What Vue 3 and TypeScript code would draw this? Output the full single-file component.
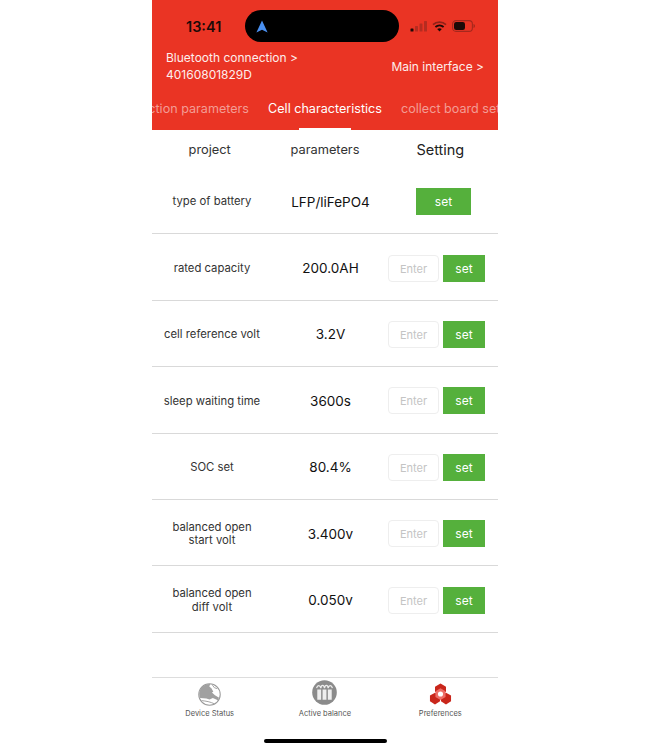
<template>
  <div class="phone">
    <header class="top">
      <div class="status-bar">
        <span class="time">13:41</span>
        <div class="island">
          <svg class="nav-arrow" width="12" height="13" viewBox="0 0 12 13">
            <path d="M6 .6 11.6 12.4 6 9.8.4 12.4Z" fill="#4a90f0" />
          </svg>
        </div>
        <div class="status-icons">
          <svg width="17" height="12" viewBox="0 0 17 12">
            <rect x="0.5" y="8.500" width="3" height="3" rx=".6" fill="#1c0a08" />
            <rect x="5" y="6" width="3" height="5.500" rx=".6" fill="#b52c20" />
            <rect x="9.500" y="3.500" width="3" height="8" rx=".6" fill="#b52c20" />
            <rect x="14" y="1" width="3" height="10.500" rx=".6" fill="#b52c20" />
          </svg>
          <svg width="15" height="11" viewBox="0 0 15 11">
            <path d="M1 3.600C4.600.4 10.400.4 14 3.600" fill="none" stroke="#8f2118" stroke-width="1.800" />
            <path d="M3.400 6C5.700 4 9.300 4 11.600 6" fill="none" stroke="#1c0a08" stroke-width="1.800" />
            <path d="M7.500 10.600 5.200 8.100C6.500 7 8.500 7 9.800 8.100Z" fill="#1c0a08" />
          </svg>
          <svg width="23" height="12" viewBox="0 0 23 12">
            <rect x=".6" y=".6" width="19.800" height="10.800" rx="3.400" fill="none" stroke="#a5281d" stroke-width="1.100" />
            <rect x="2" y="2" width="11" height="8" rx="2.200" fill="#1c0a08" />
            <path d="M21.500 4v4c.9-.3 1.500-1.100 1.500-2s-.6-1.700-1.500-2Z" fill="#a5281d" />
          </svg>
        </div>
      </div>
      <div class="nav-links">
        <div class="link-left">
          <div>Bluetooth connection &gt;</div>
          <div>40160801829D</div>
        </div>
        <div class="link-right">Main interface &gt;</div>
      </div>
      <div class="tabs">
        <span class="tab side left">Protection parameters</span>
        <span class="tab active">Cell characteristics</span>
        <span class="tab side right">collect board settings</span>
      </div>
    </header>

    <div class="table-head">
      <span>project</span>
      <span>parameters</span>
      <span class="setting-title">Setting</span>
    </div>

    <main class="rows">
      <div v-for="row in rows" :key="row.label" class="row">
        <div class="label">
          <div v-for="line in row.label.split('|')" :key="line">{{ line }}</div>
        </div>
        <div class="value">{{ row.value }}</div>
        <div class="control">
          <button v-if="row.selectOnly" class="set wide">set</button>
          <template v-else>
            <input class="enter" placeholder="Enter" />
            <button class="set">set</button>
          </template>
        </div>
      </div>
    </main>

    <footer class="tabbar">
      <div class="bar-item">
        <div class="bar-icon">
          <svg class="globe" width="23" height="23" viewBox="0 0 24 24">
            <circle cx="12" cy="12" r="11.200" fill="#fff" stroke="#9a9a9a" stroke-width="1.100" />
            <path d="M2.800 6C5.500 2 9.500.8 12.800 1l-1 2.600 2.400 2.200 1.800 3.400-1.500.8 3.200 2.800 4.300 2.600-1.300 2.600-5.200-2.300-3.500 1.400-3.200-.9-6.500-.6C.8 12.500.8 9.400 2.800 6Z" fill="#a0a0a0" />
            <path d="M15 2.200l2.200 2.800 2.800.8M3.800 18.400c4.500.4 9 1.200 13.500 3.400" fill="none" stroke="#a0a0a0" stroke-width="1" />
          </svg>
        </div>
        <span>Device Status</span>
      </div>
      <div class="bar-item">
        <div class="bar-icon">
          <svg class="gifts" width="25" height="25" viewBox="0 0 26 26">
            <circle cx="13" cy="13" r="12.800" fill="#8b8b8b" />
            <path d="M5.500 10h4v10.500h-4ZM11 10h4v10.500h-4ZM16.500 10h4v10.500h-4Z" fill="#eee" />
            <path d="M4.800 8.500c.8-3.500 3.600-3.500 4.400 0 .5-4 3.100-4 3.800 0 .7-4 3.300-4 3.800 0 .8-3.500 3.600-3.500 4.400 0" fill="none" stroke="#eee" stroke-width="1.300" />
          </svg>
        </div>
        <span>Active balance</span>
      </div>
      <div class="bar-item">
        <div class="bar-icon">
          <svg class="cubes" width="23" height="22" viewBox="0 0 24 24">
            <path d="M12 .5 18 4v5.500l-6 3.300-6-3.300V4Z" fill="#c9261b" />
            <path d="M6 10.500l5.500 3V20l-5.500 3.500L.5 20v-6.500Z" fill="#c9261b" />
            <path d="M18 10.500l5.500 3V20L18 23.500 12.500 20v-6.500Z" fill="#c9261b" />
            <path d="M12 5.800 17.500 9v6.300L12 18.500l-5.500-3.200V9Z" fill="#ee6f68" />
            <circle cx="12" cy="12" r="2.800" fill="#fff" />
          </svg>
        </div>
        <span>Preferences</span>
      </div>
    </footer>
    <div class="home-bar"></div>
  </div>
</template>

<script setup lang="ts">
interface Row {
  label: string
  value: string
  selectOnly?: boolean
}

const rows: Row[] = [
  { label: 'type of battery', value: 'LFP/liFePO4', selectOnly: true },
  { label: 'rated capacity', value: '200.0AH' },
  { label: 'cell reference volt', value: '3.2V' },
  { label: 'sleep waiting time', value: '3600s' },
  { label: 'SOC set', value: '80.4%' },
  { label: 'balanced open|start volt', value: '3.400v' },
  { label: 'balanced open|diff volt', value: '0.050v' }
]
</script>

<style>
html,
body {
  margin: 0;
  background: #fff;
}
</style>

<style scoped>
.phone {
  width: 346px;
  height: 750px;
  margin: 0 auto;
  display: flex;
  flex-direction: column;
  overflow: hidden;
  font-family: Inter, 'Noto Sans', sans-serif;
  color: #222;
  background: #fff;
}

.top {
  height: 130px;
  flex-shrink: 0;
  display: flex;
  flex-direction: column;
  background: #ea3424;
  color: #fff;
}

.status-bar {
  display: flex;
  align-items: center;
  height: 32px;
  padding-top: 10px;
}

.time {
  width: 93px;
  padding-left: 34px;
  box-sizing: border-box;
  font-size: 14.500px;
  font-weight: 600;
  color: #1c0a08;
}

.island {
  width: 154px;
  height: 32px;
  border-radius: 16px;
  background: #000;
  display: flex;
  align-items: center;
  padding-left: 11px;
  box-sizing: border-box;
}

.status-icons {
  display: flex;
  align-items: center;
  gap: 5px;
  margin-left: 11px;
}

.nav-links {
  display: flex;
  align-items: center;
  justify-content: space-between;
  padding: 7px 14px 0;
  font-size: 12px;
  line-height: 17px;
  color: #fdeeec;
}

.tabs {
  position: relative;
  display: flex;
  justify-content: center;
  margin-top: auto;
  height: 37px;
  font-size: 12.600px;
}

.tab {
  line-height: 32px;
  white-space: nowrap;
}

.tab.active {
  position: relative;
  height: 37px;
  color: #fff;
}

.tab.active::after {
  content: '';
  position: absolute;
  left: 31px;
  right: 31px;
  bottom: 0;
  height: 2px;
  background: #fff;
}

.tab.side {
  position: absolute;
  top: 0;
  color: #f39c94;
}

.tab.left {
  right: 249px;
}

.tab.right {
  left: 249px;
}

.table-head {
  display: grid;
  grid-template-columns: repeat(3, 1fr);
  height: 38px;
  padding-top: 1px;
  box-sizing: border-box;
  align-items: center;
  text-align: center;
  font-size: 12.800px;
  color: #333;
}

.setting-title {
  font-size: 14.500px;
  color: #222;
}

.row {
  display: flex;
  align-items: center;
  height: 66.400px;
  padding-top: 2px;
  box-sizing: border-box;
  border-bottom: 1px solid #d9d9d9;
}

.label {
  width: 120px;
  padding-top: 1px;
  text-align: center;
  font-size: 11.300px;
  line-height: 13.500px;
  color: #333;
}

.value {
  width: 117px;
  margin-right: -1px;
  text-align: center;
  font-size: 13.500px;
  color: #111;
}

.control {
  width: 110px;
  display: flex;
  align-items: center;
  gap: 4px;
  padding-right: 13px;
  box-sizing: border-box;
}

.enter {
  width: 51px;
  height: 27px;
  padding: 1px 0 0;
  box-sizing: border-box;
  border: 1px solid #eeeeee;
  border-radius: 4px;
  background: #fff;
  text-align: center;
  font-family: inherit;
  font-size: 11px;
}

.enter::placeholder {
  color: #c4c4c4;
}

.set {
  width: 42px;
  height: 27px;
  padding: 0;
  border: none;
  background: #55b03c;
  color: #fff;
  font-family: inherit;
  font-size: 12px;
}

.set.wide {
  width: 55px;
  margin-left: 28px;
  flex-shrink: 0;
}

.tabbar {
  display: grid;
  grid-template-columns: repeat(3, 1fr);
  margin-top: auto;
  height: 46px;
  box-sizing: border-box;
  border-top: 1.500px solid #dddddd;
  padding-top: 2px;
  text-align: center;
}

.bar-item {
  display: flex;
  flex-direction: column;
  align-items: center;
  gap: 3px;
  font-size: 7.500px;
  line-height: 9px;
  color: #555;
}

.bar-icon {
  display: flex;
  height: 26px;
}

.bar-icon svg {
  display: block;
}

.globe {
  margin-top: 3px;
}

.cubes {
  margin-top: 3px;
}

.home-bar {
  width: 123px;
  height: 4px;
  border-radius: 2px;
  background: #000;
  margin: 16px auto 7px;
}
</style>
